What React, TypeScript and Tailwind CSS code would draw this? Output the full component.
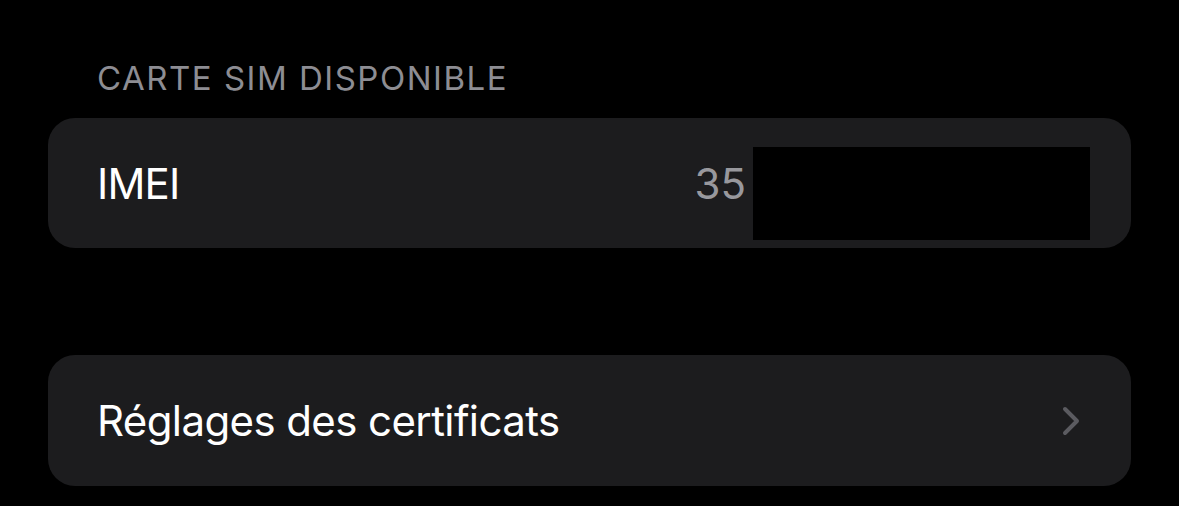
export default function App() {
  return (
    <div
      className="w-[1179px] h-[506px] bg-black overflow-hidden px-[48px]"
      style={{ fontFamily: 'Inter, "Noto Sans", sans-serif' }}
    >
      <div className="pt-[58px] pl-[49px] h-[118px] text-[33px] leading-[40px] text-[#8d8d93] tracking-[1.5px]">
        CARTE SIM DISPONIBLE
      </div>
      <div className="h-[130px] rounded-[27px] bg-[#1c1c1e] flex items-center pl-[49px] pr-[41px]">
        <span className="text-[42px] text-white tracking-[-0.8px]">IMEI</span>
        <div className="ml-auto flex items-center">
          <span className="text-[42px] text-[#98989d]">35</span>
          <div className="ml-[7px] mt-[20px] w-[337px] h-[93px] bg-black" />
        </div>
      </div>
      <div className="h-[107px]" />
      <div className="h-[131px] rounded-[27px] bg-[#1c1c1e] flex items-center pl-[49px] pr-[51px]">
        <span className="text-[42px] text-white tracking-[-0.6px]">Réglages des certificats</span>
        <svg className="ml-auto" width="18" height="30" viewBox="0 0 18 30" fill="none">
          <path d="M3 3 L15 15 L3 27" stroke="#5b5b60" strokeWidth="4" strokeLinecap="round" strokeLinejoin="round" />
        </svg>
      </div>
    </div>
  );
}
